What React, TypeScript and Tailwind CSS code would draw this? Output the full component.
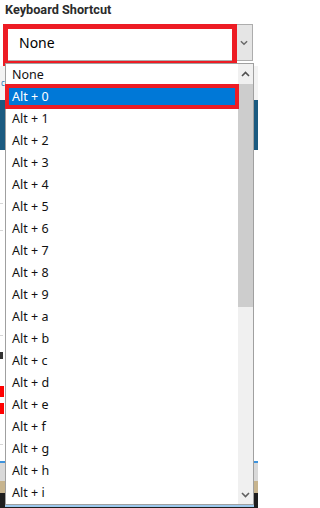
import React from "react";

const items = [
  "None",
  "Alt + 0",
  "Alt + 1",
  "Alt + 2",
  "Alt + 3",
  "Alt + 4",
  "Alt + 5",
  "Alt + 6",
  "Alt + 7",
  "Alt + 8",
  "Alt + 9",
  "Alt + a",
  "Alt + b",
  "Alt + c",
  "Alt + d",
  "Alt + e",
  "Alt + f",
  "Alt + g",
  "Alt + h",
  "Alt + i",
];

function Chevron({ up = false, className = "" }: { up?: boolean; className?: string }) {
  return (
    <svg width="9" height="6" viewBox="0 0 9 6" className={className}>
      <path
        d={up ? "M1 5 L4.5 1.5 L8 5" : "M1 1 L4.5 4.5 L8 1"}
        fill="none"
        stroke="currentColor"
        strokeWidth="1.6"
      />
    </svg>
  );
}

export default function App() {
  return (
    <div className="relative w-[258px] h-[508px] overflow-hidden bg-white font-['Noto_Sans',sans-serif] text-black">
      {/* label */}
      <div className="h-[21px] pl-[5px] pt-[2px] text-[12.7px] font-bold leading-[16px] text-[#2b2b2b] font-['Roboto',sans-serif]">
        Keyboard Shortcut
      </div>

      {/* select control */}
      <div className="relative h-[42px]">
        <div className="ml-[5px] mt-[3px] flex h-[37px] w-[248px] border border-[#adadad] bg-white">
          <div className="flex flex-1 items-center pl-[13px] text-[14px]">None</div>
          <div className="flex w-[16px] items-center justify-center bg-[#e5e5e5] text-[#6a6a6a]">
            <Chevron className="w-[8px]" />
          </div>
        </div>
        <div className="absolute left-[3px] top-0 h-[42px] w-[234px] border-[5px] border-[#ed1c24]" />
      </div>

      {/* background page content peeking out */}
      <div className="flex h-[34px] items-center bg-[#f3f3f3]">
        <span className="pl-[1px] text-[8px] leading-[10px] text-[#2a7ab8]">c</span>
      </div>
      <div className="h-[50px] bg-[#1b5a80]" />
      <div className="flex h-[311px] flex-col">
        <div className="h-[53px]" />
        <div className="h-px w-[3px] bg-[#d6d6d6]" />
        <div className="h-[26px]" />
        <div className="h-px w-[3px] bg-[#d6d6d6]" />
        <div className="h-[104px]" />
        <div className="h-px w-[3px] bg-[#d6d6d6]" />
        <div className="h-[16px]" />
        <div className="h-[7px] w-[3px] bg-[#333]" />
        <div className="h-[27px]" />
        <div className="h-[11px] w-[4px] bg-[#ff0000]" />
        <div className="h-[6px]" />
        <div className="h-[11px] w-[4px] bg-[#ff0000]" />
        <div className="h-[30px]" />
        <div className="h-px w-[3px] bg-[#d6d6d6]" />
      </div>
      <div className="h-[2px] bg-[#3d93dd]" />
      <div className="h-[18px] bg-[#d9d9d9]" />
      <div className="h-[12px] bg-[#c7b48e]" />
      <div className="h-[20px] bg-[#1e1e1e]" />

      {/* opened dropdown list */}
      <div className="absolute left-[5px] top-[63px] flex h-[442px] w-[249px] border border-[#a0a0a0] bg-white shadow-[0_2px_0_#9cc9ee]">
        <div className="flex flex-1 flex-col">
          {items.map((t) => (
            <div
              key={t}
              className={
                t === "Alt + 0"
                  ? "flex h-[22px] items-center bg-[#0078d7] pl-[6px] text-[12.5px] text-white"
                  : "flex h-[22px] items-center pl-[6px] text-[12.5px] text-[#111]"
              }
            >
              {t}
            </div>
          ))}
        </div>
        <div className="flex w-[15px] flex-col bg-[#f0f0f0]">
          <div className="flex h-[20px] items-center justify-center text-[#505050]">
            <Chevron up />
          </div>
          <div className="h-[223px] bg-[#cdcdcd]" />
          <div className="flex-1" />
          <div className="flex h-[18px] items-center justify-center text-[#606060]">
            <Chevron />
          </div>
        </div>
      </div>

      {/* annotation frame around highlighted item */}
      <div className="absolute left-[5px] top-[84px] h-[25px] w-[234px] border-4 border-[#ed1c24]" />
    </div>
  );
}
